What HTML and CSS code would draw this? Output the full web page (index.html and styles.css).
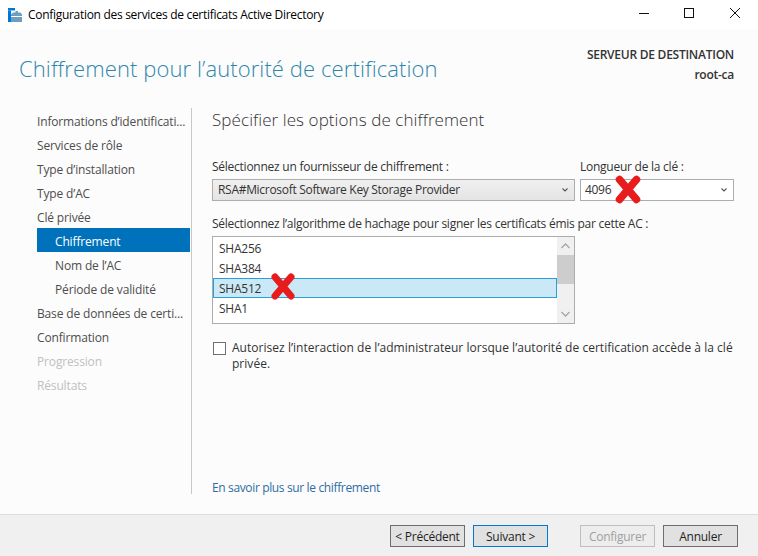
FILE: index.html
```html
<!DOCTYPE html>
<html lang="fr">
<head>
<meta charset="utf-8">
<title>Configuration des services de certificats Active Directory</title>
<link rel="stylesheet" href="styles.css">
</head>
<body>
<div class="window">
  <header class="titlebar">
    <svg class="app-icon" width="14" height="14" viewBox="0 0 14 14">
      <rect x="0" y="0" width="7" height="2.5" fill="#0078d7"/>
      <rect x="0" y="2.5" width="3" height="11.5" fill="#0078d7"/>
      <path d="M3 6.5 L5 4.5 H7.5 V3 H10 V4.5 H12.5 L14 6.5 V14 H3 Z" fill="#6d9dc0"/>
      <rect x="3" y="8" width="11" height="1" fill="#fff"/>
    </svg>
    <span class="title-text">Configuration des services de certificats Active Directory</span>
    <div class="win-controls">
      <svg class="win-btn" width="46" height="29" viewBox="0 0 46 29"><rect x="19" y="13" width="10" height="1" fill="#111"/></svg>
      <svg class="win-btn" width="46" height="29" viewBox="0 0 46 29"><rect x="18.5" y="8.5" width="9" height="9" fill="none" stroke="#111"/></svg>
      <svg class="win-btn" width="46" height="29" viewBox="0 0 46 29"><path d="M18 8 L28 18 M28 8 L18 18" stroke="#111" fill="none"/></svg>
    </div>
  </header>

  <section class="banner">
    <h1 class="page-title">Chiffrement pour l’autorité de certification</h1>
    <div class="server">
      <div class="server-label">SERVEUR DE DESTINATION</div>
      <div class="server-name">root-ca</div>
    </div>
  </section>

  <main class="main">
    <nav class="steps">
      <div class="step">Informations d’identificati...</div>
      <div class="step">Services de rôle</div>
      <div class="step">Type d’installation</div>
      <div class="step">Type d’AC</div>
      <div class="step">Clé privée</div>
      <div class="step sub active">Chiffrement</div>
      <div class="step sub">Nom de l’AC</div>
      <div class="step sub">Période de validité</div>
      <div class="step">Base de données de certi...</div>
      <div class="step">Confirmation</div>
      <div class="step off">Progression</div>
      <div class="step off">Résultats</div>
    </nav>

    <div class="content">
      <h2 class="section-title">Spécifier les options de chiffrement</h2>

      <div class="row-selects">
        <div class="field field-provider">
          <label class="label">Sélectionnez un fournisseur de chiffrement :</label>
          <div class="select select-gray">
            <span class="select-value">RSA#Microsoft Software Key Storage Provider</span>
            <svg class="chev" width="6" height="4" viewBox="0 0 6 4"><path d="M0.5 0.5 L3 3 L5.5 0.5" fill="none" stroke="#555" stroke-width="1.1"/></svg>
          </div>
        </div>
        <div class="field field-key">
          <label class="label">Longueur de la clé :</label>
          <div class="select select-white">
            <span class="select-value">4096</span>
            <svg class="chev" width="6" height="4" viewBox="0 0 6 4"><path d="M0.5 0.5 L3 3 L5.5 0.5" fill="none" stroke="#555" stroke-width="1.1"/></svg>
            <svg class="mark mark-key" width="26" height="29" viewBox="0 0 26 29"><path d="M4.5 4.5 L21.5 24.5 M21.5 4.5 L4.5 24.5" stroke="#e81c1c" stroke-width="7.5" stroke-linecap="round"/></svg>
          </div>
        </div>
      </div>

      <label class="label label-hash">Sélectionnez l’algorithme de hachage pour signer les certificats émis par cette AC :</label>
      <div class="listbox">
        <div class="options">
          <div class="option">SHA256</div>
          <div class="option">SHA384</div>
          <div class="option selected">SHA512
            <svg class="mark mark-hash" width="24" height="27" viewBox="0 0 24 27"><path d="M4 4 L20 23 M20 4 L4 23" stroke="#e81c1c" stroke-width="7" stroke-linecap="round"/></svg>
          </div>
          <div class="option">SHA1</div>
        </div>
        <div class="scrollbar">
          <svg class="arrow" width="17" height="18" viewBox="0 0 17 18"><path d="M4.5 11 L8.5 7 L12.5 11" fill="none" stroke="#a6a6a6" stroke-width="1.3"/></svg>
          <div class="track"><div class="thumb"></div></div>
          <svg class="arrow" width="17" height="18" viewBox="0 0 17 18"><path d="M4.5 7 L8.5 11 L12.5 7" fill="none" stroke="#a6a6a6" stroke-width="1.3"/></svg>
        </div>
      </div>

      <div class="check-row">
        <span class="checkbox"></span>
        <span class="check-text">Autorisez l’interaction de l’administrateur lorsque l’autorité de certification accède à la clé privée.</span>
      </div>

      <a class="more" href="#">En savoir plus sur le chiffrement</a>
    </div>
  </main>

  <footer class="footer">
    <button class="btn">&lt; Précédent</button>
    <button class="btn btn-next">Suivant &gt;</button>
    <button class="btn btn-off">Configurer</button>
    <button class="btn btn-cancel">Annuler</button>
  </footer>
</div>
</body>
</html>
```
FILE: styles.css
```css
* { box-sizing: border-box; }
html, body { margin: 0; padding: 0; }
body {
  width: 758px;
  height: 556px;
  overflow: hidden;
  font-family: "Open Sans", "Noto Sans", sans-serif;
  font-size: 12px;
  letter-spacing: -0.25px;
  color: #1f1f1f;
  background: #fcfcfc;
}
.window { display: flex; flex-direction: column; height: 556px; }

.titlebar { display: flex; align-items: center; height: 29px; background: #fff; padding-left: 8px; flex: none; }
.app-icon { flex: none; margin-right: 6px; }
.title-text { color: #000; font-size: 12px; white-space: nowrap; letter-spacing: -0.3px; }
.win-controls { margin-left: auto; display: flex; }
.win-btn { display: block; }

.banner { display: flex; justify-content: space-between; height: 79px; flex: none; padding: 16px 24px 0 19px; }
.page-title { margin: 7px 0 0; font-size: 22px; font-weight: 300; line-height: 32px; color: #2e87ab; letter-spacing: 0.1px; }
.server { text-align: right; line-height: 20px; font-weight: 600; color: #333; font-size: 12px; }

.main { display: flex; flex: 1; min-height: 0; }
.steps { width: 192px; margin-bottom: 20px; padding: 0 0 0 37px; border-right: 1px solid #c8c8c8; flex: none; }
.step { height: 24px; line-height: 28px; width: 153px; white-space: nowrap; color: #4d4d4d; letter-spacing: -0.15px; }
.step.sub { padding-left: 18px; }
.step.active { background: #0072bc; color: #fff; }
.step.off { color: #c0c0c0; }

.content { flex: 1; padding: 0 24px 0 20px; display: flex; flex-direction: column; }
.section-title { margin: 0 0 1px; font-size: 17px; font-weight: 300; line-height: 24px; color: #333; height: 24px; letter-spacing: 0.08px; }

.row-selects { display: flex; gap: 5px; margin-top: 26px; }
.field { display: flex; flex-direction: column; }
.field-provider { width: 363px; }
.field-key { width: 154px; }
.label { display: block; line-height: 16px; white-space: nowrap; color: #333; }
.select { position: relative; height: 22px; margin-top: 4px; border: 1px solid #adadad; display: flex; align-items: center; justify-content: space-between; padding: 0 5px; color: #333; }
.select-value { line-height: 20px; letter-spacing: -0.3px; }
.select-gray { background: linear-gradient(#f0f0f0, #e4e4e4); }
.select-white { background: #fff; padding-left: 4px; }
.chev { flex: none; margin-right: 1px; }

.label-hash { margin-top: 15px; }
.listbox { display: flex; width: 363px; height: 88px; margin-top: 4px; border: 1px solid #adadad; background: #fff; }
.options { flex: 1; padding-top: 1px; }
.option { position: relative; height: 20px; line-height: 22px; padding-left: 6px; color: #333; }
.option.selected { background: #cbe8f6; border: 1px solid #26a0da; padding-left: 5px; line-height: 20px; }
.scrollbar { width: 17px; background: #f0f0f0; display: flex; flex-direction: column; flex: none; }
.arrow { flex: none; display: block; }
.track { flex: 1; }
.thumb { height: 29px; background: #cdcdcd; }

.mark { position: absolute; }
.mark-key { left: 34px; top: -5px; }
.mark-hash { left: 57px; top: -6px; }

.check-row { display: flex; align-items: flex-start; margin-top: 16px; width: 526px; }
.checkbox { flex: none; width: 13px; height: 13px; margin: 2px 6px 0 1px; border: 1px solid #707070; background: #fff; }
.check-text { line-height: 16px; color: #333; letter-spacing: 0.03px; }

.more { margin-top: auto; margin-bottom: 18px; color: #2e6da4; text-decoration: none; line-height: 16px; letter-spacing: -0.36px; }

.footer { flex: none; height: 42px; background: #f0f0f0; border-top: 1px solid #dcdcdc; display: flex; align-items: flex-start; padding: 10px 20px 0 390px; }
.btn { width: 75px; height: 22px; padding: 0; font: inherit; letter-spacing: inherit; color: #1f1f1f; background: #e1e1e1; border: 1px solid #6e6e6e; }
.btn-next { margin-left: 8px; border-color: #0078d7; }
.btn-off { margin-left: 32px; color: #a0a0a0; background: #ededed; border-color: #bfbfbf; }
.btn-cancel { margin-left: 8px; }
```
